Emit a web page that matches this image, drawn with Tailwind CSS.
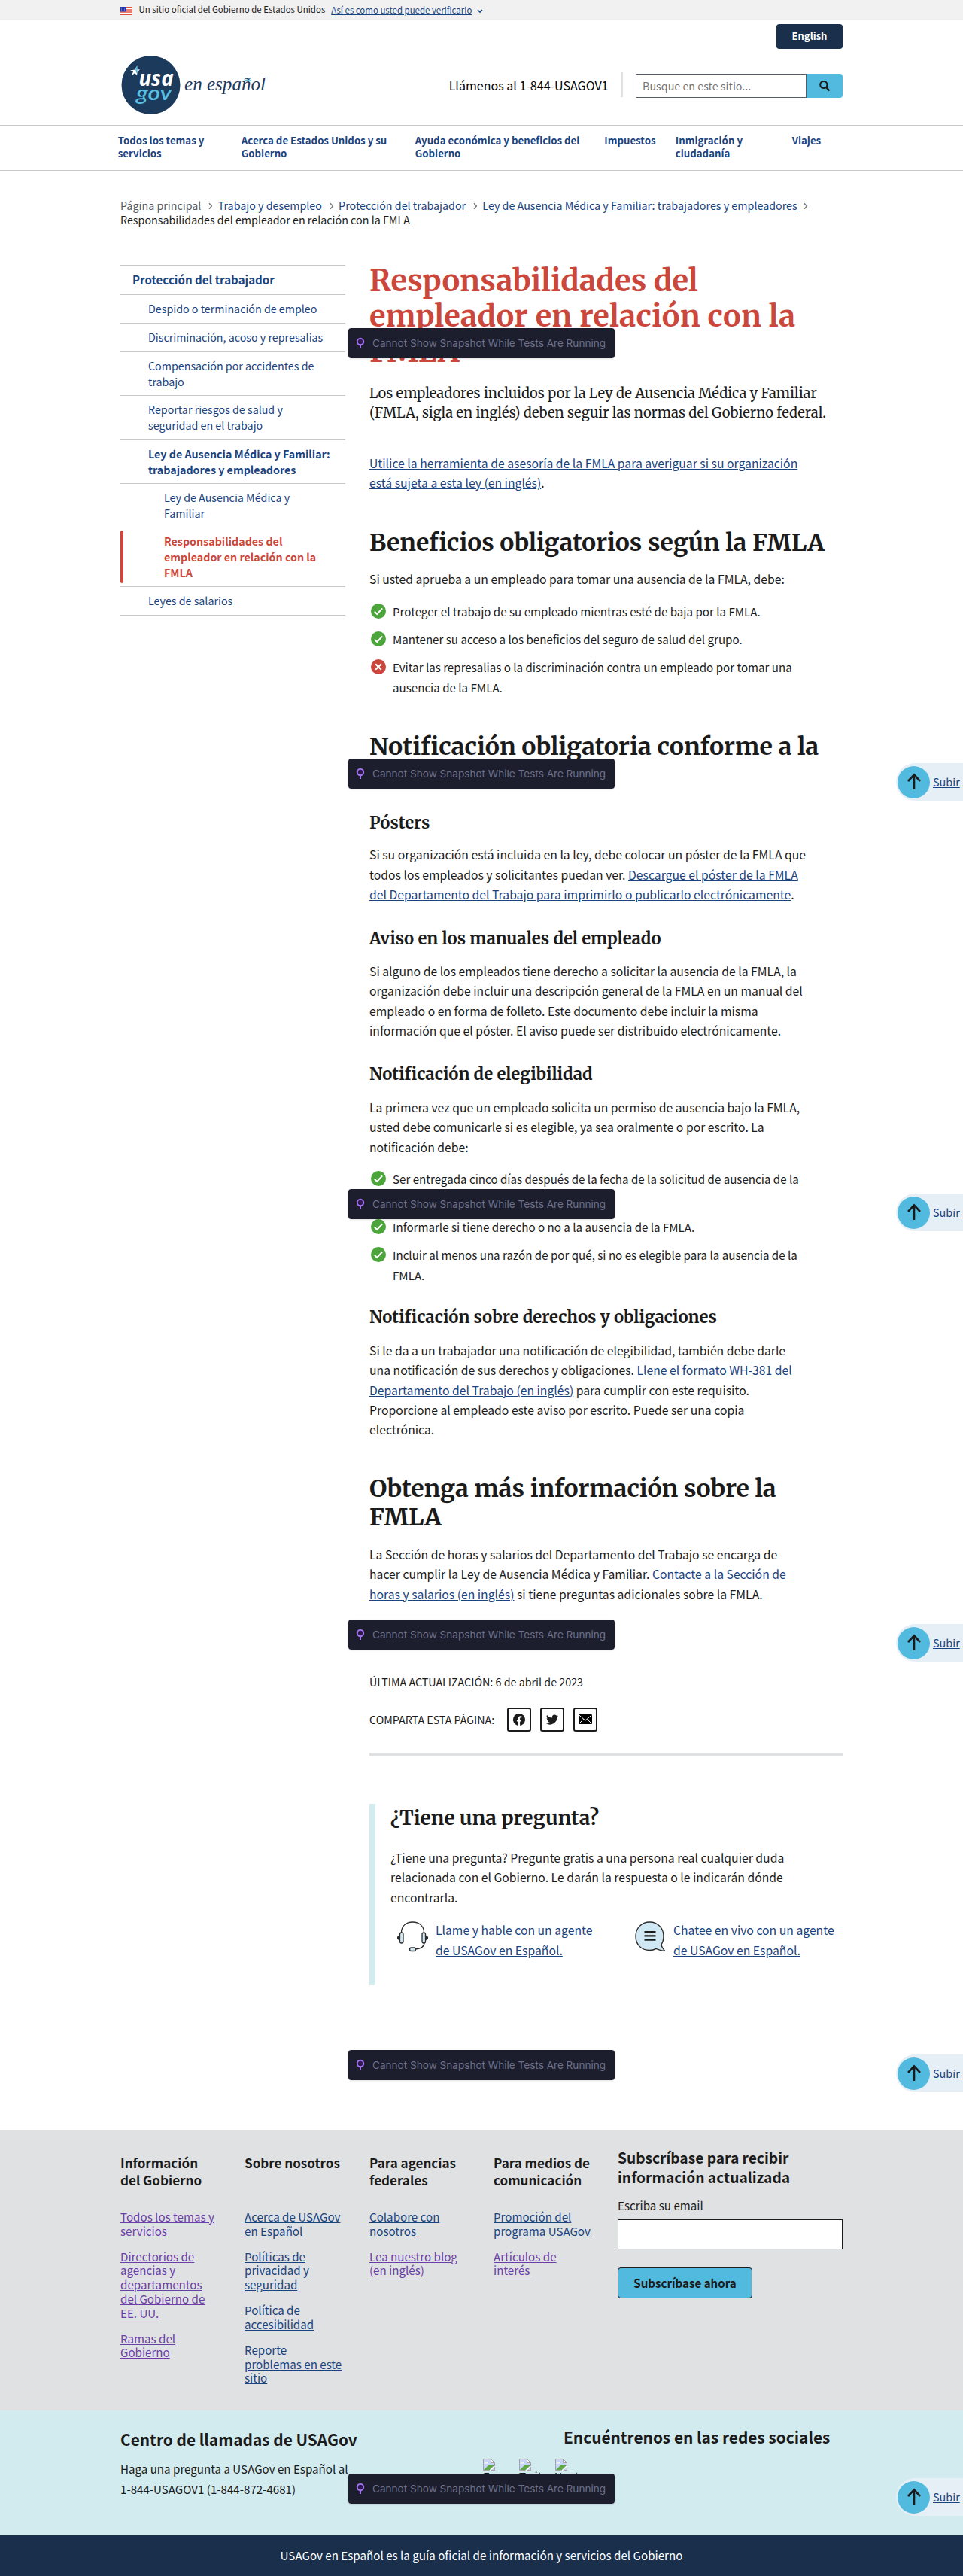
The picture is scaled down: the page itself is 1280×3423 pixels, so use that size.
<!DOCTYPE html>
<html lang="es">
<head>
<meta charset="utf-8">
<title>Responsabilidades del empleador en relación con la FMLA | USAGov en Español</title>
<script src="https://cdn.jsdelivr.net/npm/@tailwindcss/browser@4"></script>
</head>
<body class="relative w-[1280px] overflow-x-hidden bg-white font-['Noto_Sans_CJK_SC','Open_Sans',sans-serif] text-[#1b1b1b]">

<svg class="hidden">
  <symbol id="check" viewBox="0 0 20 20"><circle cx="10" cy="10" r="10" fill="#4ba53b"/><path d="M4.8 10.6l3.4 3.4 7-7.6" fill="none" stroke="#fff" stroke-width="2"/></symbol>
  <symbol id="cross" viewBox="0 0 20 20"><circle cx="10" cy="10" r="10" fill="#cb473b"/><path d="M6.2 6.2l7.6 7.6M13.8 6.2l-7.6 7.6" fill="none" stroke="#fff" stroke-width="2.2"/></symbol>
  <symbol id="chev" viewBox="0 0 8 10"><path d="M2 1.2L5.4 5 2 8.8" fill="none" stroke="#71767a" stroke-width="1.4"/></symbol>
  <symbol id="pin" viewBox="0 0 12 16"><circle cx="6" cy="6" r="4.2" fill="#2b1a4d" stroke="#a371f0" stroke-width="2"/><path d="M6 10v5" stroke="#a371f0" stroke-width="2"/></symbol>
  <symbol id="up" viewBox="0 0 22 24"><path d="M11 22V3M3 11l8-8.6 8 8.6" fill="none" stroke="#1b1b1b" stroke-width="2.6"/></symbol>
  <symbol id="broken" viewBox="0 0 16 16"><path d="M.5.5h10l5 5v10H.5z" fill="#c6d5f5" stroke="#a3a3a3"/><path d="M10.500 .5v5h5z" fill="#fff" stroke="#a3a3a3"/><path d="M1 6.500q1.500-2.500 3-1 1.500-1.500 2.500 1z" fill="#fff"/><path d="M1 15L8 8l7 1-6 6z" fill="#5fa84a"/><path d="M9 16l6.500-6" stroke="#fff" stroke-width="1.500"/></symbol>
</svg>

<!-- Official banner -->
<div class="flex h-[27px] bg-[#f1f1f1] pl-[160px] text-[11.45px] leading-[27px] whitespace-nowrap">
  <svg class="mt-[9px] h-[11px] w-4 shrink-0" viewBox="0 0 16 11"><path fill="#fff" d="M0 0h16v11H0z"/><path d="M0 .8h16M0 3.900h16M0 7h16M0 10.200h16" stroke="#e0533d" stroke-width="1.500"/><path fill="#2a36b0" d="M0 0h8v6.500H0z"/><path d="M1 1.500h6M1 3.200h6M1 4.900h6" stroke="#aab0e6" stroke-width=".7" stroke-dasharray="1 1"/></svg>
  <span class="-mt-px ml-[8.500px]">Un sitio oficial del Gobierno de Estados Unidos</span>
  <a class="ml-[8px] text-[#1a4480] underline">Así es como usted puede verificarlo</a>
  <svg class="mt-[12px] ml-[7px] h-[6px] w-[8px]" viewBox="0 0 8 6"><path d="M1 1l3 3.200L7 1" fill="none" stroke="#1a4480" stroke-width="1.500"/></svg>
</div>

<!-- Header -->
<header class="h-[139px] pr-[160px] pl-[161px]">
  <div class="flex justify-end pt-[5px]">
    <a class="h-[33px] w-[88px] rounded-[4px] bg-[#192f4c] text-center text-[13px] leading-[31px] font-bold text-white">English</a>
  </div>
  <div class="mt-[9px] flex h-[78px]">
    <svg class="h-[78px] w-[200px]" viewBox="0 0 200 78">
      <circle cx="39.500" cy="39" r="39" fill="#1c3a5c"/>
      <path d="M12 19.500l6.500-1 2-4.500 1 4.500 3.500-.300-3.500 3.600-.500 4-3-2.600-4 3 2-5z" fill="#fff"/>
      <path d="M19 17.500l2.600-4.500v11.500l-1.600-2.500z" fill="#4fb9de"/>
      <text x="23.500" y="39.500" font-family="'Open Sans',Lato,sans-serif" font-weight="700" font-style="italic" font-size="28" fill="#fff" textLength="46" lengthAdjust="spacingAndGlyphs">usa</text>
      <text x="20" y="58.500" font-family="Lato,sans-serif" font-weight="600" font-style="italic" font-size="27" fill="#58bfe0" textLength="47" lengthAdjust="spacingAndGlyphs">gov</text>
      <text x="84" y="46" font-family="'Liberation Serif',serif" font-style="italic" font-size="25" fill="#1c3a5c" textLength="108" lengthAdjust="spacingAndGlyphs">en español</text>
      <path d="M164 33.500q3-2 5-.800t4-.600" fill="none" stroke="#58bfe0" stroke-width="1.500"/>
    </svg>
    <div class="ml-auto flex pt-[22px]">
      <span class="text-[16.050px] leading-[34px] whitespace-nowrap text-black">Llámenos al 1-844-USAGOV1</span>
      <span class="ml-[16.500px] h-[33px] w-[3px] bg-[#dfe1e2]"></span>
      <div class="mt-[2px] ml-[17px] flex h-[32px]">
        <div class="w-[227px] border border-[#565c65] pl-[8px] text-[14.300px] leading-[30px] text-[#757575]">Busque en este sitio...</div>
        <div class="flex w-[48px] items-center justify-center rounded-r-[4px] bg-[#52b9df]"><svg class="size-4" viewBox="0 0 16 16"><circle cx="6.800" cy="6.500" r="4.600" fill="none" stroke="#1b1b1b" stroke-width="2"/><path d="M10 10l4.500 4.500" stroke="#1b1b1b" stroke-width="2.400"/></svg></div>
      </div>
    </div>
  </div>
</header>

<!-- Main navigation -->
<nav class="grid h-[61px] grid-cols-[164px_231px_251.500px_94.500px_155px_auto] border-y border-[#c6c8ca] pt-[12px] pl-[156.800px] text-[13.250px] leading-[16.800px] font-bold whitespace-nowrap text-[#1a4480]">
  <a>Todos los temas y<br>servicios</a>
  <a>Acerca de Estados Unidos y su<br>Gobierno</a>
  <a>Ayuda económica y beneficios del<br>Gobierno</a>
  <a>Impuestos</a>
  <a>Inmigración y<br>ciudadanía</a>
  <a>Viajes</a>
</nav>

<!-- Breadcrumbs -->
<div class="pt-[35.500px] pl-[160px] text-[14.300px] leading-[19.300px] whitespace-nowrap">
  <div class="flex text-[#1a4480]">
    <a class="whitespace-pre text-[#565c65] underline">Página principal </a><svg class="mx-[5.500px] mt-[6px] h-[10px] w-[8px]"><use href="#chev"/></svg>
    <a class="whitespace-pre underline">Trabajo y desempleo </a><svg class="mx-[5.500px] mt-[6px] h-[10px] w-[8px]"><use href="#chev"/></svg>
    <a class="whitespace-pre underline">Protección del trabajador </a><svg class="mx-[5.500px] mt-[6px] h-[10px] w-[8px]"><use href="#chev"/></svg>
    <a class="whitespace-pre underline">Ley de Ausencia Médica y Familiar: trabajadores y empleadores </a><svg class="mx-[4px] mt-[6px] h-[10px] w-[8px]"><use href="#chev"/></svg>
  </div>
  <div>Responsabilidades del empleador en relación con la FMLA</div>
</div>

<main class="mt-[49.200px] flex pl-[160px]">
  <!-- Section navigation -->
  <aside class="mt-[2px] h-[466px] w-[299px] shrink-0 border-b border-[#c6c8ca] text-[14.280px] leading-[21px] whitespace-nowrap text-[#1a4480]">
    <div class="h-[39px] border-t border-[#c6c8ca] pt-[8px] pl-[16px] text-[15.120px] font-bold">Protección del trabajador</div>
    <div class="h-[38px] border-t border-[#c6c8ca] pt-[7px] pl-[37px]">Despido o terminación de empleo</div>
    <div class="h-[38px] border-t border-[#c6c8ca] pt-[7px] pl-[37px]">Discriminación, acoso y represalias</div>
    <div class="h-[58px] border-t border-[#c6c8ca] pt-[7px] pl-[37px]">Compensación por accidentes de<br>trabajo</div>
    <div class="h-[59px] border-t border-[#c6c8ca] pt-[7px] pl-[37px]">Reportar riesgos de salud y<br>seguridad en el trabajo</div>
    <div class="h-[58px] border-t border-[#c6c8ca] pt-[7px] pl-[37px] font-bold">Ley de Ausencia Médica y Familiar:<br>trabajadores y empleadores</div>
    <div class="h-[63px] border-t border-[#c6c8ca] pt-[7px] pl-[58px]">Ley de Ausencia Médica y<br>Familiar</div>
    <div class="relative h-[74px] pt-[3px] pl-[58px] font-bold text-[#cb473b]"><span class="absolute top-0 left-0 h-[70px] w-[4px] rounded-full bg-[#cb473b]"></span>Responsabilidades del<br>empleador en relación con la<br>FMLA</div>
    <div class="border-t border-[#c6c8ca] pt-[7px] pl-[37px]">Leyes de salarios</div>
  </aside>

  <!-- Article -->
  <article class="ml-[32px] w-[629px] text-[15.740px] leading-[26.400px] whitespace-nowrap [&_a]:text-[#1a4480] [&_a]:underline">
    <h1 class="font-['Merriweather','Noto_Serif','DejaVu_Serif_Condensed',serif] text-[39.800px] leading-[47px] font-bold text-[#cb473b]">Responsabilidades del<br><span class="tracking-[0.240px]">empleador en relación con la</span><br>FMLA</h1>
    <p class="mt-[18.600px] font-['Merriweather','Noto_Serif','DejaVu_Serif_Condensed',serif] text-[18.350px]">Los empleadores incluidos por la Ley de Ausencia Médica y Familiar<br>(FMLA, sigla en inglés) deben seguir las normas del Gobierno federal.</p>
    <p class="mt-[40px]"><a>Utilice la herramienta de asesoría de la FMLA para averiguar si su organización<br>está sujeta a esta ley (en inglés)</a>.</p>

    <h2 class="mt-[47px] font-['Merriweather','Noto_Serif','DejaVu_Serif_Condensed',serif] text-[31.950px] leading-[37.800px] font-bold">Beneficios obligatorios según la FMLA</h2>
    <p class="mt-[17px]">Si usted aprueba a un empleado para tomar una ausencia de la FMLA, debe:</p>
    <ul class="mt-[15.200px] mb-[46.800px] flex flex-col gap-[10.800px] text-[15.140px]">
      <li class="flex"><svg class="mt-[3px] mr-[9px] ml-[2px] size-5"><use href="#check"/></svg>Proteger el trabajo de su empleado mientras esté de baja por la FMLA.</li>
      <li class="flex"><svg class="mt-[3px] mr-[9px] ml-[2px] size-5"><use href="#check"/></svg>Mantener su acceso a los beneficios del seguro de salud del grupo.</li>
      <li class="flex"><svg class="mt-[3px] mr-[9px] ml-[2px] size-5"><use href="#cross"/></svg><div>Evitar las represalias o la discriminación contra un empleado por tomar una<br>ausencia de la FMLA.</div></li>
    </ul>

    <h2 class="font-['Merriweather','Noto_Serif','DejaVu_Serif_Condensed',serif] text-[32.150px] leading-[37.800px] font-bold">Notificación obligatoria conforme a la<br>FMLA</h2>
    <h3 class="mt-[31.400px] font-['Merriweather','Noto_Serif','DejaVu_Serif_Condensed',serif] text-[22.030px] leading-[27px] font-bold">Pósters</h3>
    <p class="mt-[16.500px]">Si su organización está incluida en la ley, debe colocar un póster de la FMLA que<br>todos los empleados y solicitantes puedan ver. <a>Descargue el póster de la FMLA<br>del Departamento del Trabajo para imprimirlo o publicarlo electrónicamente</a>.</p>
    <h3 class="mt-[31px] font-['Merriweather','Noto_Serif','DejaVu_Serif_Condensed',serif] text-[22.030px] leading-[27px] font-bold">Aviso en los manuales del empleado</h3>
    <p class="mt-[17.200px]">Si alguno de los empleados tiene derecho a solicitar la ausencia de la FMLA, la<br>organización debe incluir una descripción general de la FMLA en un manual del<br>empleado o en forma de folleto. Este documento debe incluir la misma<br>información que el póster. El aviso puede ser distribuido electrónicamente.</p>
    <h3 class="mt-[31px] font-['Merriweather','Noto_Serif','DejaVu_Serif_Condensed',serif] text-[22.030px] leading-[27px] font-bold">Notificación de elegibilidad</h3>
    <p class="mt-[17.500px]">La primera vez que un empleado solicita un permiso de ausencia bajo la FMLA,<br>usted debe comunicarle si es elegible, ya sea oralmente o por escrito. La<br>notificación debe:</p>
    <ul class="mt-[15.200px] mb-[30px] flex flex-col gap-[10.800px] text-[15.140px]">
      <li class="flex"><svg class="mt-[3px] mr-[9px] ml-[2px] size-5"><use href="#check"/></svg><div>Ser entregada cinco días después de la fecha de la solicitud de ausencia de la<br>FMLA.</div></li>
      <li class="flex"><svg class="mt-[3px] mr-[9px] ml-[2px] size-5"><use href="#check"/></svg>Informarle si tiene derecho o no a la ausencia de la FMLA.</li>
      <li class="flex"><svg class="mt-[3px] mr-[9px] ml-[2px] size-5"><use href="#check"/></svg><div>Incluir al menos una razón de por qué, si no es elegible para la ausencia de la<br>FMLA.</div></li>
    </ul>
    <h3 class="font-['Merriweather','Noto_Serif','DejaVu_Serif_Condensed',serif] text-[22.030px] leading-[27px] font-bold">Notificación sobre derechos y obligaciones</h3>
    <p class="mt-[17.800px]">Si le da a un trabajador una notificación de elegibilidad, también debe darle<br>una notificación de sus derechos y obligaciones. <a>Llene el formato WH-381 del<br>Departamento del Trabajo (en inglés)</a> para cumplir con este requisito.<br>Proporcione al empleado este aviso por escrito. Puede ser una copia<br>electrónica.</p>

    <h2 class="mt-[46px] font-['Merriweather','Noto_Serif','DejaVu_Serif_Condensed',serif] text-[32px] leading-[37.800px] font-bold">Obtenga más información sobre la<br>FMLA</h2>
    <p class="mt-[17.400px]">La Sección de horas y salarios del Departamento del Trabajo se encarga de<br>hacer cumplir la Ley de Ausencia Médica y Familiar. <a>Contacte a la Sección de<br>horas y salarios (en inglés)</a> si tiene preguntas adicionales sobre la FMLA.</p>

    <p class="mt-[90.800px] text-[14.300px] leading-[24px]">ÚLTIMA ACTUALIZACIÓN: 6 de abril de 2023</p>
    <div class="mt-[22px] flex items-center gap-[12px] text-[14.250px] leading-[24px]">
      <span class="mr-[4.800px]">COMPARTA ESTA PÁGINA:</span>
      <span class="flex size-8 items-center justify-center rounded-[3px] border-2 border-[#1b1b1b]"><svg class="size-4" viewBox="0 0 16 16"><circle cx="8" cy="8" r="8" fill="#1b1b1b"/><path d="M6.800 16v-5.600H4.900V8.100h1.900V6.300c0-2 1.200-3.100 3-3.100.8 0 1.600.1 1.600.1v2h-1c-1 0-1.300.6-1.300 1.200v1.600h2.200l-.4 2.300H9.100V16z" fill="#fff"/></svg></span>
      <span class="flex size-8 items-center justify-center rounded-[3px] border-2 border-[#1b1b1b]"><svg class="size-4" viewBox="0 0 16 16"><path d="M16 3.040a6.600 6.600 0 0 1-1.900.52 3.300 3.300 0 0 0 1.440-1.820 6.500 6.500 0 0 1-2.080.8 3.280 3.280 0 0 0-5.600 3A9.300 9.300 0 0 1 1.110 2.100a3.280 3.280 0 0 0 1.020 4.380 3.300 3.300 0 0 1-1.490-.41v.04a3.280 3.280 0 0 0 2.630 3.220 3.300 3.300 0 0 1-1.480.06 3.280 3.280 0 0 0 3.070 2.280A6.600 6.600 0 0 1 0 13.030 9.300 9.300 0 0 0 14.360 4.740 6.700 6.700 0 0 0 16 3.040z" fill="#1b1b1b"/></svg></span>
      <span class="flex size-8 items-center justify-center rounded-[3px] border-2 border-[#1b1b1b]"><svg class="h-[13px] w-[18px]" viewBox="0 0 18 13"><path d="M0 0h18v13H0z"/><path d="M.5.8L9 8.200 17.500.8M.8 12.300l5.700-6M17.200 12.300l-5.700-6" fill="none" stroke="#fff" stroke-width="1"/></svg></span>
    </div>
    <div class="mt-[28px] h-[4px] bg-[#dfe1e2]"></div>

    <section class="mt-[64px] h-[241px] border-l-8 border-[#d2ebef] pt-[3px] pl-[20px]">
      <h2 class="font-['Merriweather','Noto_Serif','DejaVu_Serif_Condensed',serif] text-[26.180px] leading-[32px] font-bold">¿Tiene una pregunta?</h2>
      <p class="mt-[24px]">¿Tiene una pregunta? Pregunte gratis a una persona real cualquier duda<br>relacionada con el Gobierno. Le darán la respuesta o le indicarán dónde<br>encontrarla.</p>
      <div class="mt-[17.400px] flex">
        <div class="flex w-[316px] pl-[9px]">
          <svg class="mt-[1px] mr-[10px] h-[41px] w-[41px]" viewBox="0 0 41 41" fill="none" stroke="#2b2b2b" stroke-width="1.300"><path d="M5.500 15C5.500 6 12 1 20.500 1S35.500 6 35.500 15M36 28c0 6-5 8.500-12 9"/><rect x="3.500" y="15" width="4.500" height="14" rx="2.200" fill="#cfe8f3"/><rect x="33" y="15" width="4.500" height="14" rx="2.200" fill="#cfe8f3"/><path d="M3 19.500Q.5 20 .5 22t2.500 2.500zM38 19.500q2.500.500 2.500 2.500t-2.500 2.500z" fill="#2b2b2b"/><rect x="16.500" y="35" width="8" height="4.500" rx="2.200" fill="#cfe8f3"/></svg>
          <a>Llame y hable con un agente<br>de USAGov en Español.</a>
        </div>
        <div class="flex pl-[9px]">
          <svg class="mt-[1px] mr-[10px] h-[41px] w-[41px]" viewBox="0 0 41 41"><path d="M38 20C38 9 30.500 1 19.500 1S1 9 1 20s7.500 18.500 18.500 18.500c3.500 0 6-.700 8.500-2.200 3.500 1.500 7.500 3 11.500 3-2-2.500-4-5.500-4.800-8C37 28 38 24 38 20z" fill="#cfe8f3" stroke="#2b2b2b" stroke-width="1.400"/><path d="M12.500 14h15M12.500 19.300h15M12.500 24.600h15" stroke="#1b1b1b" stroke-width="2.200"/></svg>
          <a>Chatee en vivo con un agente<br>de USAGov en Español.</a>
        </div>
      </div>
    </section>
  </article>
</main>

<!-- Footer -->
<footer class="mt-[193px]">
  <div class="grid h-[372px] grid-cols-[165px_166px_165px_165px_299px] bg-[#dfe1e2] pl-[160px] text-[15.130px] leading-[18.700px] whitespace-nowrap [&_a]:block [&_a]:underline [&_h3]:h-[59px] [&_h3]:text-[17.060px] [&_h3]:leading-[23px] [&_h3]:font-bold [&_h3]:text-[#1b1b1b]">
    <div class="flex flex-col gap-[15.300px] pt-[31px] text-[#6b3fa8]">
      <h3>Información<br>del Gobierno</h3>
      <a>Todos los temas y<br>servicios</a>
      <a>Directorios de<br>agencias y<br>departamentos<br>del Gobierno de<br>EE. UU.</a>
      <a>Ramas del<br>Gobierno</a>
    </div>
    <div class="flex flex-col gap-[15.300px] pt-[31px] text-[#1a4480]">
      <h3>Sobre nosotros</h3>
      <a>Acerca de USAGov<br>en Español</a>
      <a>Políticas de<br>privacidad y<br>seguridad</a>
      <a>Política de<br>accesibilidad</a>
      <a>Reporte<br>problemas en este<br>sitio</a>
    </div>
    <div class="flex flex-col gap-[15.300px] pt-[31px] text-[#1a4480]">
      <h3>Para agencias<br>federales</h3>
      <a>Colabore con<br>nosotros</a>
      <a class="text-[#6b3fa8]">Lea nuestro blog<br>(en inglés)</a>
    </div>
    <div class="flex flex-col gap-[15.300px] pt-[31px] text-[#1a4480]">
      <h3>Para medios de<br>comunicación</h3>
      <a>Promoción del<br>programa USAGov</a>
      <a class="text-[#6b3fa8]">Artículos de<br>interés</a>
    </div>
    <div class="pt-[23.500px]">
      <h4 class="text-[19.200px] leading-[26px] font-bold">Subscríbase para recibir<br>información actualizada</h4>
      <div class="mt-[11.500px] leading-[24px]">Escriba su email</div>
      <div class="mt-[7px] h-[40px] border border-[#1b1b1b] bg-white"></div>
      <div class="mt-[24px] h-[41px] w-[179px] rounded-[4px] border border-[#1b1b1b] bg-[#52b9df] text-center text-[15.100px] leading-[38px] font-bold">Subscríbase ahora</div>
    </div>
  </div>

  <div class="flex h-[166px] bg-[#d2ebef] pl-[160px] whitespace-nowrap">
    <div class="w-[481px] pt-[23px]">
      <h4 class="text-[20.830px] leading-[31px] font-bold">Centro de llamadas de USAGov</h4>
      <p class="mt-[10.600px] text-[15.130px] leading-[26.400px]">Haga una pregunta a USAGov en Español al<br>1-844-USAGOV1 (1-844-872-4681)</p>
    </div>
    <div class="pt-[20px]">
      <h4 class="ml-[108px] text-[20.830px] leading-[31px] font-bold">Encuéntrenos en las redes sociales</h4>
      <div class="mt-[13px] flex gap-[16px] pl-px text-[15.130px] leading-[14px]">
        <span class="block w-[32px]"><svg class="size-4"><use href="#broken"/></svg>Face</span>
        <span class="block w-[32px]"><svg class="size-4"><use href="#broken"/></svg>Twit</span>
        <span class="block w-[32px]"><svg class="size-4"><use href="#broken"/></svg>Yout</span>
      </div>
    </div>
  </div>

  <div class="h-[54px] bg-[#192f4c] text-center text-[15.160px] leading-[53px] text-white">USAGov en Español es la guía oficial de información y servicios del Gobierno</div>
</footer>

<!-- Floating snapshot notices -->
<div class="absolute top-[436px] left-[463px] flex h-[40px] w-[354px] items-center rounded-[4px] bg-[#1c1e2e] pl-[10px] font-['Inter',sans-serif] text-[13.580px] whitespace-nowrap text-[#6d7089] shadow-sm"><svg class="mr-[10px] h-[16px] w-[12px]"><use href="#pin"/></svg>Cannot Show Snapshot While Tests Are Running</div>
<div class="absolute top-[1008px] left-[463px] flex h-[40px] w-[354px] items-center rounded-[4px] bg-[#1c1e2e] pl-[10px] font-['Inter',sans-serif] text-[13.580px] whitespace-nowrap text-[#6d7089] shadow-sm"><svg class="mr-[10px] h-[16px] w-[12px]"><use href="#pin"/></svg>Cannot Show Snapshot While Tests Are Running</div>
<div class="absolute top-[1580px] left-[463px] flex h-[40px] w-[354px] items-center rounded-[4px] bg-[#1c1e2e] pl-[10px] font-['Inter',sans-serif] text-[13.580px] whitespace-nowrap text-[#6d7089] shadow-sm"><svg class="mr-[10px] h-[16px] w-[12px]"><use href="#pin"/></svg>Cannot Show Snapshot While Tests Are Running</div>
<div class="absolute top-[2152px] left-[463px] flex h-[40px] w-[354px] items-center rounded-[4px] bg-[#1c1e2e] pl-[10px] font-['Inter',sans-serif] text-[13.580px] whitespace-nowrap text-[#6d7089] shadow-sm"><svg class="mr-[10px] h-[16px] w-[12px]"><use href="#pin"/></svg>Cannot Show Snapshot While Tests Are Running</div>
<div class="absolute top-[2724px] left-[463px] flex h-[40px] w-[354px] items-center rounded-[4px] bg-[#1c1e2e] pl-[10px] font-['Inter',sans-serif] text-[13.580px] whitespace-nowrap text-[#6d7089] shadow-sm"><svg class="mr-[10px] h-[16px] w-[12px]"><use href="#pin"/></svg>Cannot Show Snapshot While Tests Are Running</div>
<div class="absolute top-[3287px] left-[463px] flex h-[40px] w-[354px] items-center rounded-[4px] bg-[#1c1e2e] pl-[10px] font-['Inter',sans-serif] text-[13.580px] whitespace-nowrap text-[#6d7089] shadow-sm"><svg class="mr-[10px] h-[16px] w-[12px]"><use href="#pin"/></svg>Cannot Show Snapshot While Tests Are Running</div>

<!-- Back-to-top buttons -->
<a class="absolute top-[1014px] right-0 flex h-[50px] w-[89px] items-center rounded-l-[25px] bg-[#e7eff6] pl-[2px] text-[14.400px] text-[#1a4480]"><span class="mr-[4px] flex size-[43px] items-center justify-center rounded-full bg-[#52b9df]"><svg class="h-[24px] w-[22px]"><use href="#up"/></svg></span><span class="underline">Subir</span></a>
<a class="absolute top-[1586px] right-0 flex h-[50px] w-[89px] items-center rounded-l-[25px] bg-[#e7eff6] pl-[2px] text-[14.400px] text-[#1a4480]"><span class="mr-[4px] flex size-[43px] items-center justify-center rounded-full bg-[#52b9df]"><svg class="h-[24px] w-[22px]"><use href="#up"/></svg></span><span class="underline">Subir</span></a>
<a class="absolute top-[2158px] right-0 flex h-[50px] w-[89px] items-center rounded-l-[25px] bg-[#e7eff6] pl-[2px] text-[14.400px] text-[#1a4480]"><span class="mr-[4px] flex size-[43px] items-center justify-center rounded-full bg-[#52b9df]"><svg class="h-[24px] w-[22px]"><use href="#up"/></svg></span><span class="underline">Subir</span></a>
<a class="absolute top-[2730px] right-0 flex h-[50px] w-[89px] items-center rounded-l-[25px] bg-[#e7eff6] pl-[2px] text-[14.400px] text-[#1a4480]"><span class="mr-[4px] flex size-[43px] items-center justify-center rounded-full bg-[#52b9df]"><svg class="h-[24px] w-[22px]"><use href="#up"/></svg></span><span class="underline">Subir</span></a>
<a class="absolute top-[3293px] right-0 flex h-[50px] w-[89px] items-center rounded-l-[25px] bg-[#e7eff6] pl-[2px] text-[14.400px] text-[#1a4480]"><span class="mr-[4px] flex size-[43px] items-center justify-center rounded-full bg-[#52b9df]"><svg class="h-[24px] w-[22px]"><use href="#up"/></svg></span><span class="underline">Subir</span></a>
</body>
</html>
